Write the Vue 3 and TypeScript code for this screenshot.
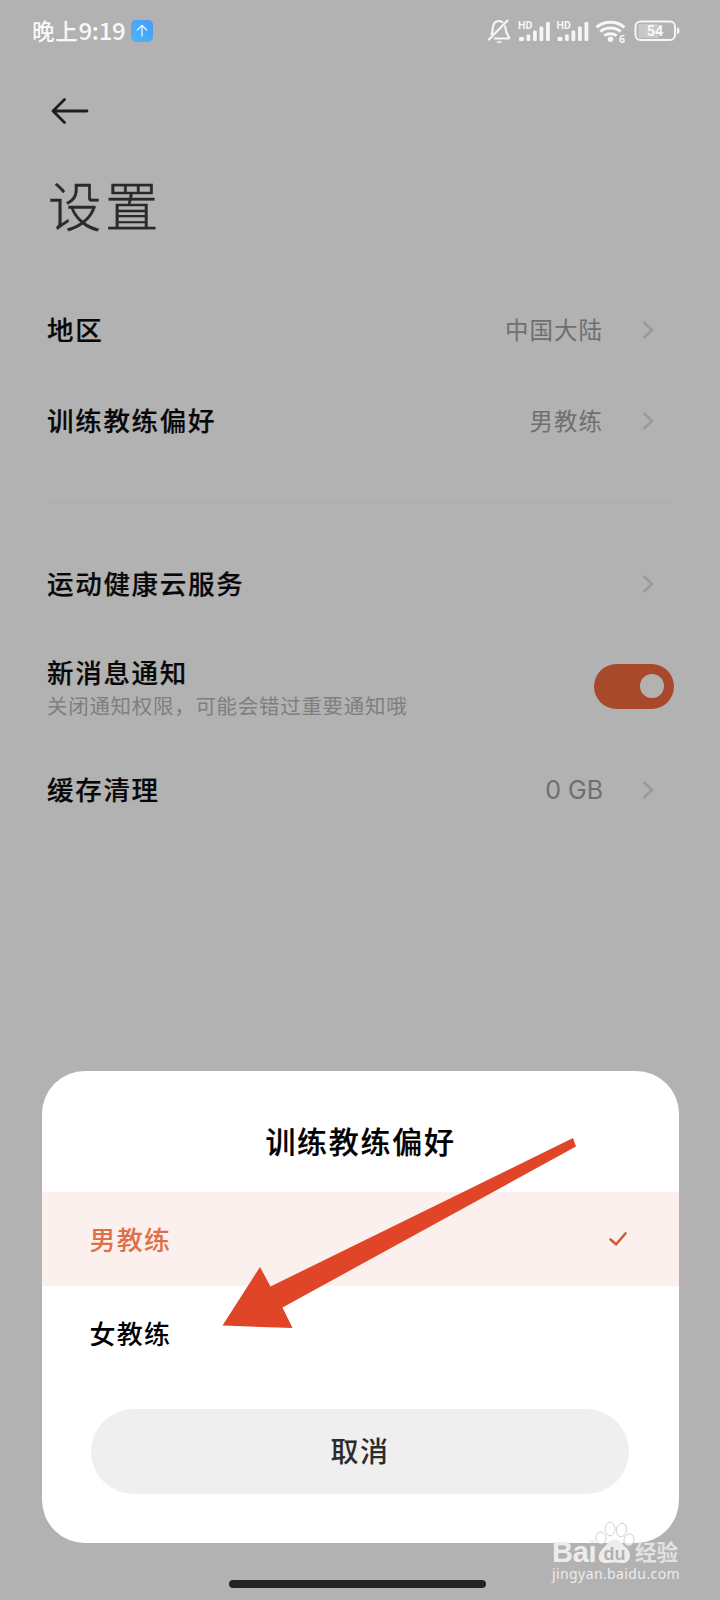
<script setup lang="ts">
interface Row {
  key: string
  label: string
  hint?: string
  value?: string
  toggle?: boolean
}

const groups: Row[][] = [
  [
    { key: 'region', label: '地区', value: '中国大陆' },
    { key: 'coach', label: '训练教练偏好', value: '男教练' },
  ],
  [
    { key: 'cloud', label: '运动健康云服务' },
    { key: 'notice', label: '新消息通知', hint: '关闭通知权限，可能会错过重要通知哦', toggle: true },
    { key: 'cache', label: '缓存清理', value: '0 GB' },
  ],
]

const options = [
  { label: '男教练', selected: true },
  { label: '女教练', selected: false },
]
</script>

<template>
  <div class="screen">
    <header class="status">
      <div class="clock"><span class="zh">晚上</span><span class="num">9:19</span></div>
      <svg class="badge" viewBox="0 0 22 22">
        <defs>
          <linearGradient id="badgeFill" x1="0" y1="1" x2="1" y2="0">
            <stop offset="0" stop-color="#4cb6fb" />
            <stop offset="1" stop-color="#479af6" />
          </linearGradient>
        </defs>
        <rect width="22" height="22" rx="5" fill="url(#badgeFill)" />
        <path d="M11 16V6M6.3 10 11 5.5 15.7 10" fill="none" stroke="#e4f4ff" stroke-width="1.3" stroke-linecap="round" />
      </svg>
      <svg class="indicators" viewBox="0 0 200 30">
        <g fill="none" stroke="#f6f6f6" stroke-width="2.2" stroke-linecap="round" stroke-linejoin="round">
          <path d="M2 21.5 20.500 2.500" />
          <path d="M4.500 16C5.800 14.500 5.500 13 5.800 10 6.200 5.500 8.500 3 12 3 13.300 3 14.500 3.300 15.300 4" />
          <path d="M18.200 8.500C19 11 18 14.500 22 19V20.500H8" />
          <path d="M10.500 24H14" stroke-width="1.600" />
        </g>
        <g fill="#f6f6f6">
          <g v-for="x in [31, 69.5]" :key="x" :transform="`translate(${x} 0)`">
            <text x="0" y="10.500" class="hd">HD</text>
            <rect x="1" y="19" width="5" height="4" rx="1" />
            <rect x="8.500" y="16.500" width="3.800" height="6.500" rx="1.200" />
            <rect x="15" y="12.500" width="3.800" height="10.500" rx="1.200" />
            <rect x="21.500" y="8.500" width="3.800" height="14.500" rx="1.200" />
            <rect x="28" y="4" width="3.800" height="19" rx="1.200" />
          </g>
          <circle cx="123.500" cy="21.300" r="2.700" />
          <text x="132" y="25" class="six">6</text>
        </g>
        <g fill="none" stroke="#f6f6f6" stroke-width="3">
          <path d="M109.500 9.300C117.500 2.500 129.500 2.500 137.500 9.300" />
          <path d="M113.300 13.500C119 8.800 128 8.800 133.700 13.500" />
          <path d="M117.200 17.600C120.800 15 126.200 15 129.800 17.600" />
        </g>
        <rect x="151.500" y="6" width="20" height="14" fill="#c8c8c8" />
        <rect x="148.500" y="3.500" width="39.500" height="18.500" rx="5" fill="none" stroke="#f6f6f6" stroke-width="2" />
        <path d="M190 9.500Q192.500 9.500 192.500 12.700 192.500 16 190 16Z" fill="#f6f6f6" />
        <text x="168" y="18" class="level">54</text>
      </svg>
    </header>

    <nav class="nav">
      <svg class="back" viewBox="0 0 38 28">
        <path d="M36 14H2M13.500 2.500 2 14 13.500 25.500" fill="none" stroke="#1e1e1e" stroke-width="2.800" stroke-linecap="round" stroke-linejoin="round" />
      </svg>
    </nav>
    <h1 class="title">设置</h1>

    <main class="list">
      <section v-for="(rows, i) in groups" :key="i" class="group">
        <div v-for="row in rows" :key="row.key" class="row" :class="row.key">
          <div class="texts">
            <div class="label">{{ row.label }}</div>
            <div v-if="row.hint" class="hint">{{ row.hint }}</div>
          </div>
          <span v-if="row.value" class="value" :class="{ latin: row.key === 'cache' }">{{ row.value }}</span>
          <span v-if="row.toggle" class="toggle"><i class="knob"></i></span>
          <svg v-else class="chevron" viewBox="0 0 12 20">
            <path d="M1.500 2 10 10 1.500 18" fill="none" stroke="#9b9b9b" stroke-width="2.800" />
          </svg>
        </div>
      </section>
    </main>

    <div class="sheet">
      <h2 class="sheet-title">训练教练偏好</h2>
      <div v-for="o in options" :key="o.label" class="option" :class="{ selected: o.selected }">
        <span class="option-label">{{ o.label }}</span>
        <svg v-if="o.selected" class="check" viewBox="0 0 18 14">
          <path d="M1.500 7.500 7 12.300 16.500 1.500" fill="none" stroke="#cf5f3a" stroke-width="2.600" stroke-linecap="round" stroke-linejoin="round" />
        </svg>
      </div>
      <button class="cancel">取消</button>
    </div>

    <svg class="pointer" viewBox="0 0 356 194">
      <path d="M.500 188.500 38 130 48.500 149.500 351 1 354 9.500 60.500 170.500 70.500 191Z" fill="#e04528" />
    </svg>

    <div class="homebar"></div>

    <div class="watermark">
      <div class="brand">
        <span class="bai">Bai</span>
        <svg class="paw" viewBox="0 0 40 44">
          <g fill="#fff" fill-opacity=".75" stroke="#c6c6c6" stroke-width=".8">
            <ellipse cx="6" cy="18" rx="5" ry="6" transform="rotate(-12 6 18)" />
            <ellipse cx="15" cy="9" rx="5" ry="6.800" />
            <ellipse cx="26.500" cy="10" rx="5" ry="6.800" transform="rotate(10 26.500 10)" />
            <ellipse cx="34" cy="20" rx="5" ry="6" transform="rotate(14 34 20)" />
          </g>
          <path d="M19.500 19.500C24.500 19.500 27 24 31 27.500 38 34 35 43 28 43 24 43 22.500 42.500 19.500 42.500 16 42.500 14 43 11 43 2 43 2 34 8 28.500 12 25 14 19.500 19.500 19.500Z" fill="#ededed" />
          <text x="19.500" y="39.500" class="du">du</text>
        </svg>
        <span class="jy">经验</span>
      </div>
      <div class="url">jingyan.baidu.com</div>
    </div>
  </div>
</template>

<style>
body {
  margin: 0;
}
</style>

<style scoped>
.screen {
  position: relative;
  width: 720px;
  height: 1600px;
  overflow: hidden;
  background: #b2b2b2;
  font-family: "Noto Sans CJK SC", "Noto Sans", sans-serif;
  color: #080808;
}
.status {
  display: flex;
  align-items: center;
  height: 62px;
  padding: 0 39px 0 32px;
  color: #f8f8f8;
}
.clock {
  display: flex;
  align-items: center;
  width: 99px;
  margin-top: -3px;
  font-weight: 500;
  line-height: 30px;
}
.zh {
  font-size: 22.500px;
  letter-spacing: 0.700px;
}
.num {
  font-size: 24px;
  letter-spacing: -0.300px;
}
.badge {
  width: 22px;
  height: 22px;
}
.indicators {
  width: 200px;
  height: 30px;
  margin-left: auto;
  margin-right: -6px;
  margin-top: 3px;
  overflow: visible;
}
.hd {
  font: 700 10.500px Roboto, sans-serif;
}
.six {
  font: 700 10.500px "Noto Sans", sans-serif;
}
.level {
  font: 700 14.500px Roboto, sans-serif;
  fill: #f8f8f8;
  text-anchor: middle;
}
.nav {
  height: 98px;
  display: flex;
  align-items: center;
  padding-left: 51px;
}
.back {
  width: 38px;
  height: 28px;
}
.title {
  margin: 0;
  height: 92px;
  padding-left: 48px;
  line-height: 87px;
  font-size: 53.500px;
  font-weight: 300;
  letter-spacing: 3.500px;
  -webkit-text-stroke: 0.400px #2a2a2a;
  color: #2a2a2a;
}
.list {
  margin-top: 32px;
  padding: 0 47px;
}
.group + .group {
  margin-top: 36px;
  padding-top: 35px;
  border-top: 1px solid #aaa;
}
.row {
  display: flex;
  align-items: center;
  height: 91px;
}
.row.notice {
  height: 114px;
}
.row.cache {
  height: 93px;
}
.texts {
  flex: 1;
  margin-top: -1px;
}
.row.notice .texts {
  margin-top: 1px;
}
.label {
  font-size: 26.500px;
  line-height: 36px;
  font-weight: 500;
  letter-spacing: 1.700px;
  -webkit-text-stroke: 0.200px #080808;
}
.hint {
  font-size: 20.500px;
  line-height: 30px;
  letter-spacing: 0.700px;
  color: #7f7f7f;
}
.value {
  margin-top: -1px;
  font-size: 23.500px;
  letter-spacing: 1px;
  color: #6f6f6f;
}
.value.latin {
  margin-top: 0;
  font: 25px Inter, sans-serif;
  letter-spacing: 0;
}
.chevron {
  width: 12px;
  height: 20px;
  margin: 0 19px 0 39px;
}
.toggle {
  display: flex;
  align-items: center;
  justify-content: flex-end;
  width: 80px;
  height: 45px;
  margin-right: -1px;
  padding-right: 10px;
  box-sizing: border-box;
  border-radius: 23px;
  background: #a8492b;
}
.knob {
  width: 24px;
  height: 24px;
  border-radius: 50%;
  background: #b4b2b0;
}
.sheet {
  position: absolute;
  left: 41.500px;
  top: 1071px;
  width: 637px;
  height: 472px;
  border-radius: 43px;
  background: #fff;
}
.sheet-title {
  margin: 0;
  height: 121px;
  line-height: 139px;
  padding-left: 1px;
  text-align: center;
  font-size: 30px;
  font-weight: 500;
  letter-spacing: 1.700px;
  -webkit-text-stroke: 0.200px #000;
  color: #000;
}
.option {
  display: flex;
  align-items: center;
  justify-content: space-between;
  height: 94px;
  padding: 0 52px 0 48px;
  font-size: 26px;
  font-weight: 500;
  letter-spacing: 1.200px;
  color: #000;
}
.option-label {
  margin-top: -2px;
}
.option.selected {
  background: #fbf0ed;
  color: #dd7048;
}
.check {
  width: 18px;
  height: 14px;
}
.cancel {
  display: block;
  width: 538px;
  height: 85px;
  margin: 29px 0 0 49.500px;
  padding: 0 0 4px;
  border: 0;
  border-radius: 43px;
  background: #efefef;
  font: 500 28px "Noto Sans CJK SC", sans-serif;
  letter-spacing: 1.500px;
  color: #2c2c2c;
}
.pointer {
  position: absolute;
  left: 222px;
  top: 1137px;
  width: 356px;
  height: 194px;
}
.homebar {
  position: absolute;
  left: 229px;
  top: 1580px;
  width: 257px;
  height: 8px;
  border-radius: 4px;
  background: #232323;
}
.watermark {
  position: absolute;
  left: 552px;
  top: 1520px;
  width: 134px;
  color: #ededed;
}
.brand {
  display: flex;
  height: 44px;
}
.bai {
  width: 43px;
  padding-top: 18px;
  box-sizing: border-box;
  font: 700 29px/28px "Liberation Sans", sans-serif;
  letter-spacing: -0.300px;
}
.paw {
  width: 40px;
  height: 44px;
  overflow: visible;
}
.du {
  font: 700 18px "Liberation Sans", sans-serif;
  fill: #b2b2b2;
  text-anchor: middle;
}
.jy {
  padding-top: 18px;
  font-size: 21.500px;
  line-height: 26px;
  font-weight: 700;
  color: #e2e2e2;
  white-space: nowrap;
}
.url {
  font: 14px/20px "Noto Sans", sans-serif;
  letter-spacing: 0.400px;
}
</style>
